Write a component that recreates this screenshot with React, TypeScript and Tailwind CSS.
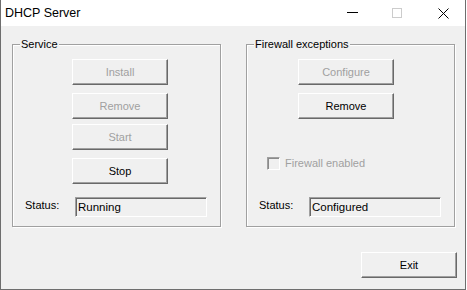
import React from "react";

const btnBase =
  "w-[96px] h-[26px] flex items-center justify-center bg-[#f0f0f0] border-t border-l border-t-white border-l-white border-r border-b border-r-[#696969] border-b-[#696969] shadow-[inset_-1px_-1px_0_#a0a0a0] text-[11px] leading-none";

function Btn({ label, disabled, className = "" }: { label: string; disabled?: boolean; className?: string }) {
  return (
    <div className={`${btnBase} ${disabled ? "text-[#a0a0a0]" : "text-black"} ${className}`}>
      {label}
    </div>
  );
}

function StatusRow({ value, className = "" }: { value: string; className?: string }) {
  return (
    <div className={`flex items-center pl-[12px] ${className}`}>
      <div className="w-[50px] text-[11px] leading-[13px] text-black mb-[3px]">Status:</div>
      <div className="w-[132px] h-[20px] flex items-center pl-[1px] bg-[#f0f0f0] border-t border-l border-t-[#a0a0a0] border-l-[#a0a0a0] border-r border-b border-r-white border-b-white shadow-[inset_1px_1px_0_#696969] text-[11.5px] leading-none text-black">
        <span className="pl-[1px] pt-[1px]">{value}</span>
      </div>
    </div>
  );
}

function Group({ title, children }: { title: string; children: React.ReactNode }) {
  return (
    <div className="relative w-[209px] h-[183px] border border-[#a0a0a0] shadow-[1px_1px_0_#fff,inset_1px_1px_0_#fff] flex flex-col">
      <div className="absolute left-[7px] top-[-7px] px-px bg-[#f0f0f0] text-[11px] leading-[13px] text-black">
        {title}
      </div>
      {children}
    </div>
  );
}

export default function App() {
  return (
    <div className="w-[466px] h-[290px] flex flex-col border-l border-r border-b border-[#6e6e6e] bg-[#f0f0f0] font-['Liberation_Sans',Arial,sans-serif]">
      <div className="h-[26px] bg-white flex items-center shrink-0">
        <div className="pl-[4px] text-[12.5px] text-black leading-none">DHCP Server</div>
        <div className="flex-1" />
        <svg width="11" height="11" viewBox="0 0 11 11" className="mt-[-1px]">
          <line x1="0" y1="5.5" x2="11" y2="5.5" stroke="#000" strokeWidth="1" />
        </svg>
        <svg width="10" height="10" viewBox="0 0 10 10" className="ml-[34px] mt-[-1px]">
          <rect x="0.5" y="0.5" width="9" height="9" fill="none" stroke="#cccccc" strokeWidth="1" />
        </svg>
        <svg width="11" height="11" viewBox="0 0 11 11" className="ml-[36px] mr-[16px]">
          <line x1="0.5" y1="0.5" x2="10.5" y2="10.5" stroke="#000" strokeWidth="1" />
          <line x1="10.5" y1="0.5" x2="0.5" y2="10.5" stroke="#000" strokeWidth="1" />
        </svg>
      </div>
      <div className="flex-1 flex flex-col pt-[18px]">
        <div className="flex gap-[25px] pl-[11px]">
          <Group title="Service">
            <div className="flex flex-col pl-[59px]">
              <Btn label="Install" disabled className="mt-[14px]" />
              <Btn label="Remove" disabled className="mt-[8px]" />
              <Btn label="Start" disabled className="mt-[5px]" />
              <Btn label="Stop" className="mt-[8px]" />
            </div>
            <StatusRow value="Running" className="mt-[13px]" />
          </Group>
          <Group title="Firewall exceptions">
            <div className="flex flex-col pl-[51px]">
              <Btn label="Configure" disabled className="mt-[14px]" />
              <Btn label="Remove" className="mt-[8px]" />
            </div>
            <div className="flex items-center pl-[20px] mt-[38px] h-[13px]">
              <div className="w-[13px] h-[13px] bg-[#f0f0f0] border-t border-l border-t-[#a0a0a0] border-l-[#a0a0a0] border-r border-b border-r-white border-b-white shadow-[inset_1px_1px_0_#8a8a8a]" />
              <span className="ml-[5px] text-[11px] leading-[13px] text-[#a0a0a0]">Firewall enabled</span>
            </div>
            <StatusRow value="Configured" className="mt-[27px]" />
          </Group>
        </div>
        <div className="flex justify-end pr-[8px] mt-[25px]">
          <Btn label="Exit" />
        </div>
      </div>
    </div>
  );
}
